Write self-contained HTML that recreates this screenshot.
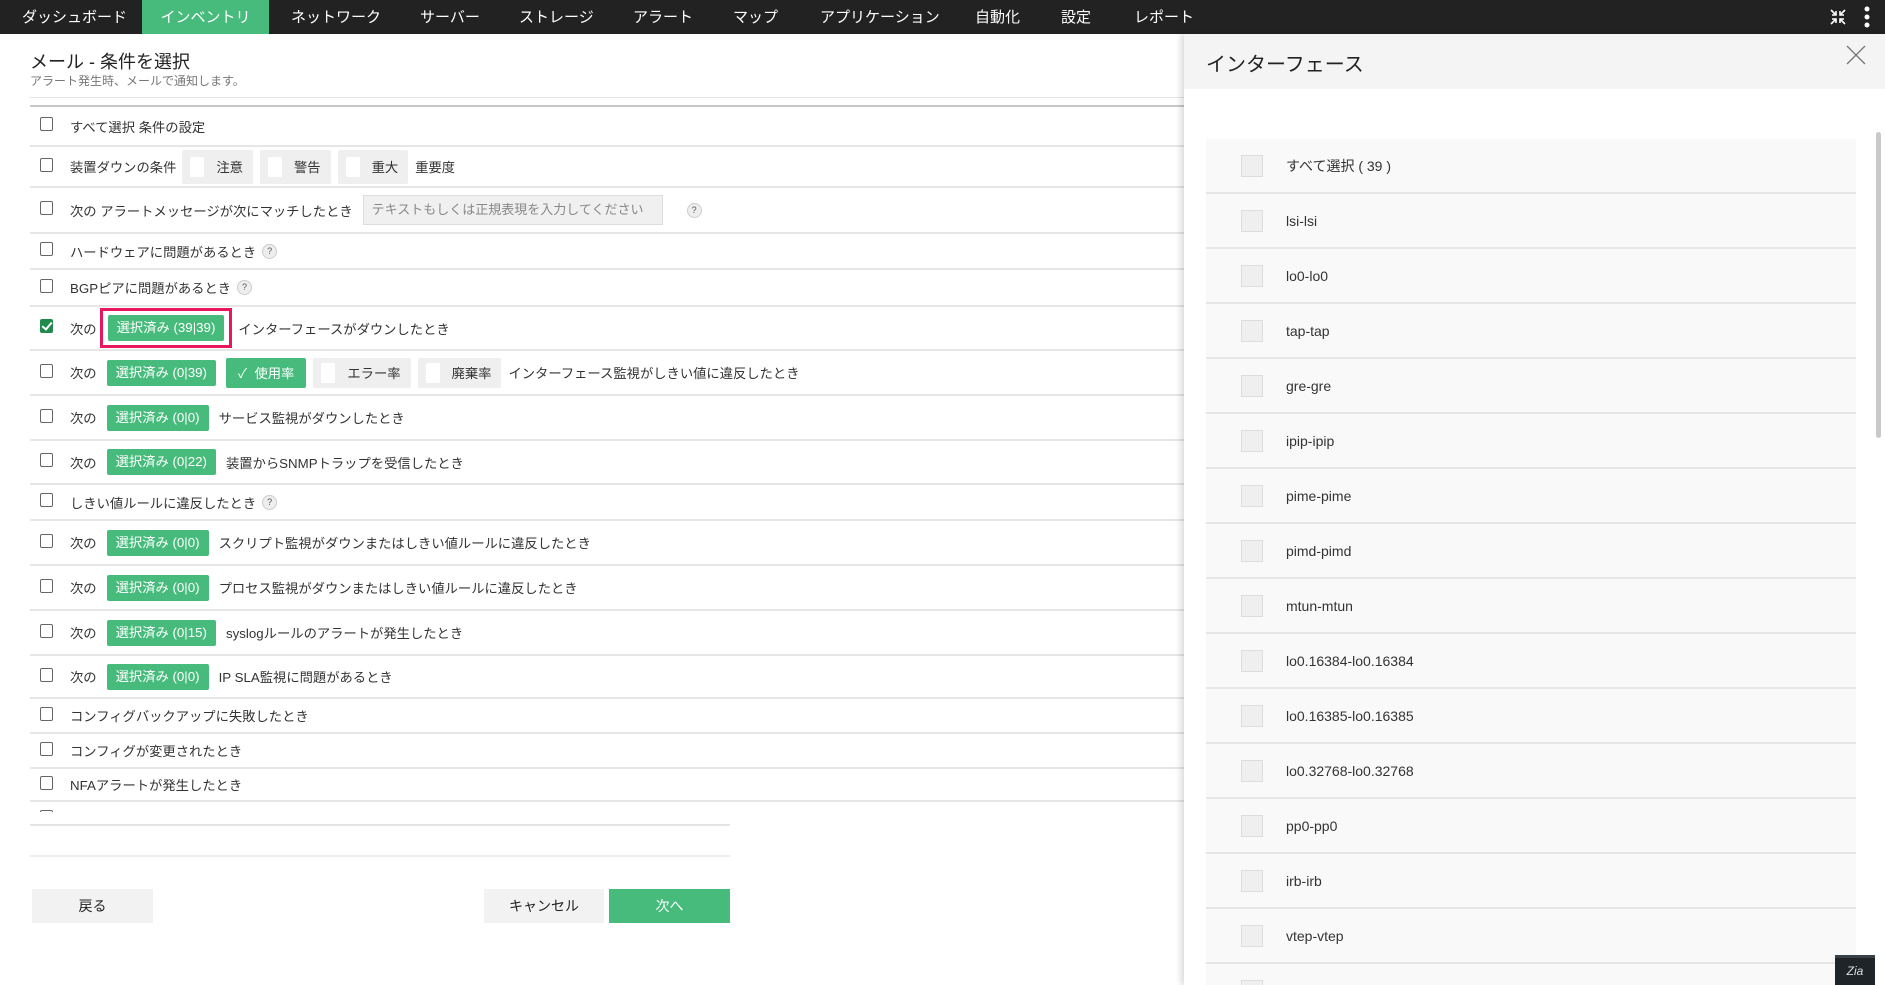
<!DOCTYPE html>
<html><head><meta charset="utf-8"><style>
*{box-sizing:border-box;margin:0;padding:0}
html{width:1885px;height:985px;overflow:hidden}
body{width:1885px;height:985px;overflow:hidden;background:#fff;font-family:"Liberation Sans","Noto Sans CJK JP",sans-serif;color:#333;position:relative;font-size:14px}
.nav{position:absolute;left:0;top:0;width:1885px;height:34px;background:#222}
.nav span{position:absolute;top:0;height:34px;line-height:36px;color:#fff;font-size:15px}
.nav .act{background:#47bb7c;left:142px;width:127px;text-align:center}
.title{position:absolute;left:30px;top:48px;font-size:18px;color:#222}
.sub{position:absolute;left:30px;top:72px;font-size:12px;color:#777}
.hl{position:absolute;left:30px;width:1154px;height:1px;background:#e4e4e4}
.list{position:absolute;left:30px;top:105px;width:1154px;height:707px;overflow:hidden;border-top:2px solid #c8c8c8}
.row{display:flex;align-items:center;border-bottom:2px solid #e6e6e6;font-size:13.3px;color:#333;white-space:nowrap}
.cb{width:13px;height:14px;border:1px solid #666;border-radius:2px;margin:-4px 17px 0 10px;flex:none;background:#fff}
.cb.on{background:#1f8a4c;border-color:#1f8a4c;position:relative}
.cb.on:after{content:"";position:absolute;left:3px;top:0px;width:4px;height:8px;border:solid #fff;border-width:0 2px 2px 0;transform:rotate(40deg)}
.g{background:#47bb7c;color:#fff;height:26px;line-height:26px;padding:0 9px;border-radius:2px;margin:0 10px 0 10px;font-size:13.3px}
.chip{background:#efefef;height:34px;display:flex;align-items:center;padding:0 10px 0 8px;margin-right:7px;border-radius:2px}
.chip i{display:inline-block;width:14px;height:20px;background:#fff;margin-right:12px;border-radius:2px}
.q{display:inline-block;width:15px;height:15px;border-radius:50%;background:#eee;border:1px solid #ccc;font-size:9px;text-align:center;line-height:13px;margin-left:6px;color:#555}
.btn{position:absolute;top:889px;height:34px;line-height:34px;text-align:center;font-size:14px;color:#222;background:#f2f2f2}
.panel{position:absolute;left:1184px;top:34px;width:701px;height:951px;background:#fff;box-shadow:-3px 0 6px rgba(0,0,0,.15);overflow:hidden}
.ph{height:55px;background:#f4f4f4;position:relative}
.ph span{position:absolute;left:22px;top:14px;font-size:20px;color:#222}
.ir{position:absolute;left:22px;width:650px;height:55px;background:#f9f9f9;border-bottom:2px solid #e6e6e6;display:flex;align-items:center;font-size:14px;color:#333}
.ir i{width:22px;height:22px;background:#efefef;border:1px solid #ddd;margin:0 23px 0 35px}
</style></head><body>
<div class="nav">
<span style="left:22px">ダッシュボード</span>
<span class="act">インベントリ</span>
<span style="left:291px">ネットワーク</span>
<span style="left:420px">サーバー</span>
<span style="left:519px">ストレージ</span>
<span style="left:633px">アラート</span>
<span style="left:733px">マップ</span>
<span style="left:820px">アプリケーション</span>
<span style="left:975px">自動化</span>
<span style="left:1061px">設定</span>
<span style="left:1134px">レポート</span>
<svg style="position:absolute;left:1830px;top:9px" width="16" height="16" viewBox="0 0 16 16" stroke="#fff" stroke-width="1.6" fill="none"><path d="M1 1l5 5M6 2v4H2M15 1l-5 5M10 2v4h4M1 15l5-5M6 14v-4H2M15 15l-5-5M10 14v-4h4"/></svg>
<svg style="position:absolute;left:1864px;top:6px" width="6" height="22"><circle cx="3" cy="3" r="2.5" fill="#fff"/><circle cx="3" cy="11" r="2.5" fill="#fff"/><circle cx="3" cy="19" r="2.5" fill="#fff"/></svg>
</div>
<div class="title">メール - 条件を選択</div>
<div class="sub">アラート発生時、メールで通知します。</div>
<div class="hl" style="top:97px"></div>
<div class="list">
<div class="row" style="height:40px"><span class="cb"></span>すべて選択 条件の設定</div>
<div class="row" style="height:41px"><span class="cb"></span>装置ダウンの条件<span style="width:6px"></span><span class="chip"><i></i>注意</span><span class="chip"><i></i>警告</span><span class="chip"><i></i>重大</span>重要度</div>
<div class="row" style="height:46px"><span class="cb"></span>次の アラートメッセージが次にマッチしたとき<span style="display:inline-block;margin-left:10px;width:300px;height:30px;background:#f0f0f0;border:1px solid #ddd;line-height:28px;padding-left:8px;color:#888;font-size:13px">テキストもしくは正規表現を入力してください</span><span class="q" style="margin-left:24px">?</span></div>
<div class="row" style="height:36px"><span class="cb"></span>ハードウェアに問題があるとき<span class="q">?</span></div>
<div class="row" style="height:37px"><span class="cb"></span>BGPピアに問題があるとき<span class="q">?</span></div>
<div class="row" style="height:44px"><span class="cb on"></span>次の<span style="border:3px solid #e8175d;padding:4px 5px;margin-left:3px;margin-right:6px;display:flex"><span class="g" style="margin:0">選択済み (39|39)</span></span>インターフェースがダウンしたとき</div>
<div class="row" style="height:45px"><span class="cb"></span>次の<span class="g">選択済み (0|39)</span><span class="chip" style="background:#47bb7c;color:#fff;padding:0 12px 0 12px;height:30px">✓&nbsp; 使用率</span><span class="chip" style="height:30px"><i></i>エラー率</span><span class="chip" style="height:30px"><i></i>廃棄率</span>インターフェース監視がしきい値に違反したとき</div>
<div class="row" style="height:45px"><span class="cb"></span>次の<span class="g">選択済み (0|0)</span>サービス監視がダウンしたとき</div>
<div class="row" style="height:44px"><span class="cb"></span>次の<span class="g">選択済み (0|22)</span>装置からSNMPトラップを受信したとき</div>
<div class="row" style="height:36px"><span class="cb"></span>しきい値ルールに違反したとき<span class="q">?</span></div>
<div class="row" style="height:45px"><span class="cb"></span>次の<span class="g">選択済み (0|0)</span>スクリプト監視がダウンまたはしきい値ルールに違反したとき</div>
<div class="row" style="height:45px"><span class="cb"></span>次の<span class="g">選択済み (0|0)</span>プロセス監視がダウンまたはしきい値ルールに違反したとき</div>
<div class="row" style="height:45px"><span class="cb"></span>次の<span class="g">選択済み (0|15)</span>syslogルールのアラートが発生したとき</div>
<div class="row" style="height:43px"><span class="cb"></span>次の<span class="g">選択済み (0|0)</span>IP SLA監視に問題があるとき</div>
<div class="row" style="height:35px"><span class="cb"></span>コンフィグバックアップに失敗したとき</div>
<div class="row" style="height:35px"><span class="cb"></span>コンフィグが変更されたとき</div>
<div class="row" style="height:33px"><span class="cb"></span>NFAアラートが発生したとき</div>
<div class="row" style="height:35px"><span class="cb"></span>ストレージアラートが発生したとき</div>
</div>
<div style="position:absolute;left:30px;top:824px;width:700px;height:2px;background:#e4e4e4"></div>
<div style="position:absolute;left:30px;top:855px;width:700px;height:2px;background:#eee"></div>
<div class="btn" style="left:32px;width:121px">戻る</div>
<div class="btn" style="left:484px;width:120px">キャンセル</div>
<div class="btn" style="left:609px;width:121px;background:#47bb7c;color:#fff">次へ</div>

<div class="panel">
<div class="ph"><span>インターフェース</span>
<svg style="position:absolute;left:662px;top:11px" width="20" height="20" stroke="#777" stroke-width="1.3"><path d="M1 1L19 19M19 1L1 19"/></svg></div>
<div class="ir" style="top:105px"><i></i>すべて選択 ( 39 )</div>
<div class="ir" style="top:160px"><i></i>lsi-lsi</div>
<div class="ir" style="top:215px"><i></i>lo0-lo0</div>
<div class="ir" style="top:270px"><i></i>tap-tap</div>
<div class="ir" style="top:325px"><i></i>gre-gre</div>
<div class="ir" style="top:380px"><i></i>ipip-ipip</div>
<div class="ir" style="top:435px"><i></i>pime-pime</div>
<div class="ir" style="top:490px"><i></i>pimd-pimd</div>
<div class="ir" style="top:545px"><i></i>mtun-mtun</div>
<div class="ir" style="top:600px"><i></i>lo0.16384-lo0.16384</div>
<div class="ir" style="top:655px"><i></i>lo0.16385-lo0.16385</div>
<div class="ir" style="top:710px"><i></i>lo0.32768-lo0.32768</div>
<div class="ir" style="top:765px"><i></i>pp0-pp0</div>
<div class="ir" style="top:820px"><i></i>irb-irb</div>
<div class="ir" style="top:875px"><i></i>vtep-vtep</div>
<div class="ir" style="top:930px"><i></i></div>
<div style="position:absolute;left:691px;top:86px;width:7px;height:320px;background:#fff"></div>
<div style="position:absolute;left:692px;top:98px;width:5px;height:306px;background:#c9c9c9;border-radius:3px"></div>
</div>
<div style="position:absolute;left:1835px;top:955px;width:40px;height:30px;background:#1f2429;border-top:3px solid #3a4048;color:#ddd;font-size:12px;text-align:center;line-height:26px;font-style:italic">Zia</div>
</body></html>
